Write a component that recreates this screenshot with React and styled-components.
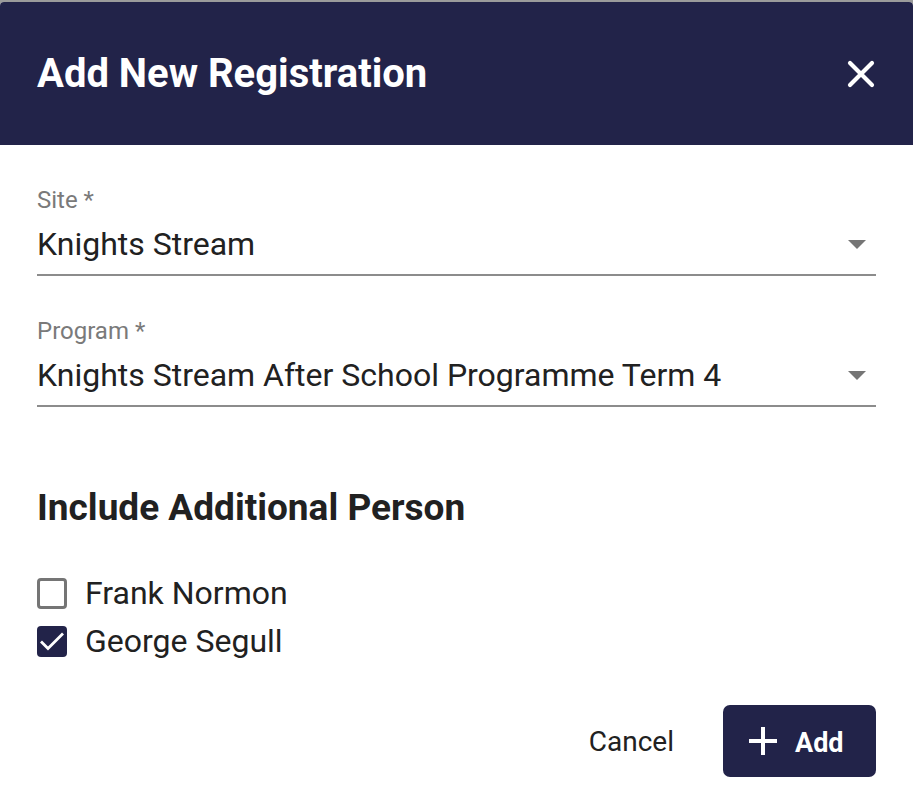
import React, { useState } from "react"
import styled, { createGlobalStyle } from "styled-components"

const GlobalStyle = createGlobalStyle`
    html, body {
        margin: 0;
        padding: 0;
        background: #9b9b9b;
        font-family: Roboto, "Liberation Sans", sans-serif;
        overflow: hidden;
    }
`

const NAVY = "#222349"

const Backdrop = styled.div`
    height: 2px;
    overflow: hidden;
    display: flex;
    align-items: flex-end;
    gap: 170px;
    padding-left: 155px;
    color: #1e1e1e;
    font-size: 28px;
    line-height: 22px;
`

const Dialog = styled.div`
    background: #fff;
    border-radius: 4px 4px 0 0;
    overflow: hidden;
    min-height: 806px;
`

const Header = styled.div`
    height: 143px;
    background: ${NAVY};
    color: #fff;
    display: flex;
    align-items: center;
    justify-content: space-between;
    padding: 0 38px 0 37px;
`

const Title = styled.h1`
    margin: 0;
    font-size: 40px;
    font-weight: 700;
`

const CloseButton = styled.button`
    background: none;
    border: none;
    padding: 0;
    width: 28px;
    height: 28px;
    display: flex;
    color: #fff;
    cursor: pointer;
`

const Body = styled.div`
    padding: 41px 37px 0 37px;
`

const Field = styled.div`
    & + & {
        margin-top: 41px;
    }
`

const Label = styled.label`
    display: block;
    color: #7a7a7a;
    font-size: 24px;
    line-height: 28px;
`

const Select = styled.div`
    display: flex;
    align-items: center;
    justify-content: space-between;
    border-bottom: 2px solid #8c8c8c;
    padding: 11px 0 11px 0;
    font-size: 32px;
    color: #212121;
    line-height: 38px;
`

const Caret = styled.span`
    width: 0;
    height: 0;
    margin-right: 10px;
    border-left: 9px solid transparent;
    border-right: 9px solid transparent;
    border-top: 9px solid #757575;
`

const SectionTitle = styled.h2`
    margin: 79px 0 39px 0;
    font-size: 37px;
    line-height: 44px;
    font-weight: 700;
    color: #212121;
`

const CheckRow = styled.label`
    display: flex;
    align-items: center;
    gap: 18px;
    height: 48px;
    font-size: 32px;
    color: #212121;
    cursor: pointer;
`

const Box = styled.span`
    box-sizing: border-box;
    width: 30px;
    height: 31px;
    border-radius: 4px;
    border: ${p => p.checked ? "none" : "3px solid #757575"};
    background: ${p => p.checked ? NAVY : "#fff"};
    display: flex;
    align-items: center;
    justify-content: center;
`

const Actions = styled.div`
    display: flex;
    justify-content: flex-end;
    align-items: center;
    gap: 49px;
    margin-top: 40px;
`

const TextButton = styled.button`
    background: none;
    border: none;
    font-family: inherit;
    font-size: 28px;
    font-weight: 400;
    color: #212121;
    padding: 0;
    cursor: pointer;
`

const PrimaryButton = styled.button`
    background: ${NAVY};
    color: #fff;
    border: none;
    border-radius: 7px;
    width: 153px;
    height: 72px;
    display: flex;
    align-items: center;
    gap: 17px;
    padding: 4px 0 0 25px;
    font-family: inherit;
    font-size: 27px;
    font-weight: 700;
    cursor: pointer;
`

const PlusIcon = styled.svg`
    margin-top: -4px;
`

const people = [
    { name: "Frank Normon", checked: false },
    { name: "George Segull", checked: true },
]

const App = () => {
    const [list, setList] = useState(people)

    const toggle = (i) => {
        setList(list.map((p, idx) => idx === i ? { ...p, checked: !p.checked } : p))
    }

    return (
        <>
            <GlobalStyle />
            <Backdrop>
                <span>School</span>
                <span>Term</span>
            </Backdrop>
            <Dialog>
                <Header>
                    <Title>Add New Registration</Title>
                    <CloseButton aria-label="close">
                        <svg width="28" height="28" viewBox="0 0 28 28">
                            <path d="M3 3 L25 25 M25 3 L3 25" stroke="#fff" strokeWidth="4.2" strokeLinecap="round" />
                        </svg>
                    </CloseButton>
                </Header>
                <Body>
                    <Field>
                        <Label>Site *</Label>
                        <Select>
                            <span>Knights Stream</span>
                            <Caret />
                        </Select>
                    </Field>
                    <Field>
                        <Label>Program *</Label>
                        <Select>
                            <span>Knights Stream After School Programme Term 4</span>
                            <Caret />
                        </Select>
                    </Field>
                    <SectionTitle>Include Additional Person</SectionTitle>
                    {list.map((p, i) => (
                        <CheckRow key={p.name} onClick={() => toggle(i)}>
                            <Box checked={p.checked}>
                                {p.checked && (
                                    <svg width="30" height="30" viewBox="0 0 30 30">
                                        <path d="M4 15.5 L11 22.5 L26 7.5" fill="none" stroke="#fff" strokeWidth="2.8" />
                                    </svg>
                                )}
                            </Box>
                            {p.name}
                        </CheckRow>
                    ))}
                    <Actions>
                        <TextButton>Cancel</TextButton>
                        <PrimaryButton>
                            <PlusIcon width="30" height="30" viewBox="0 0 30 30">
                                <path d="M15 1 V29 M1 15 H29" stroke="#fff" strokeWidth="4" />
                            </PlusIcon>
                            Add
                        </PrimaryButton>
                    </Actions>
                </Body>
            </Dialog>
        </>
    )
}

export default App
